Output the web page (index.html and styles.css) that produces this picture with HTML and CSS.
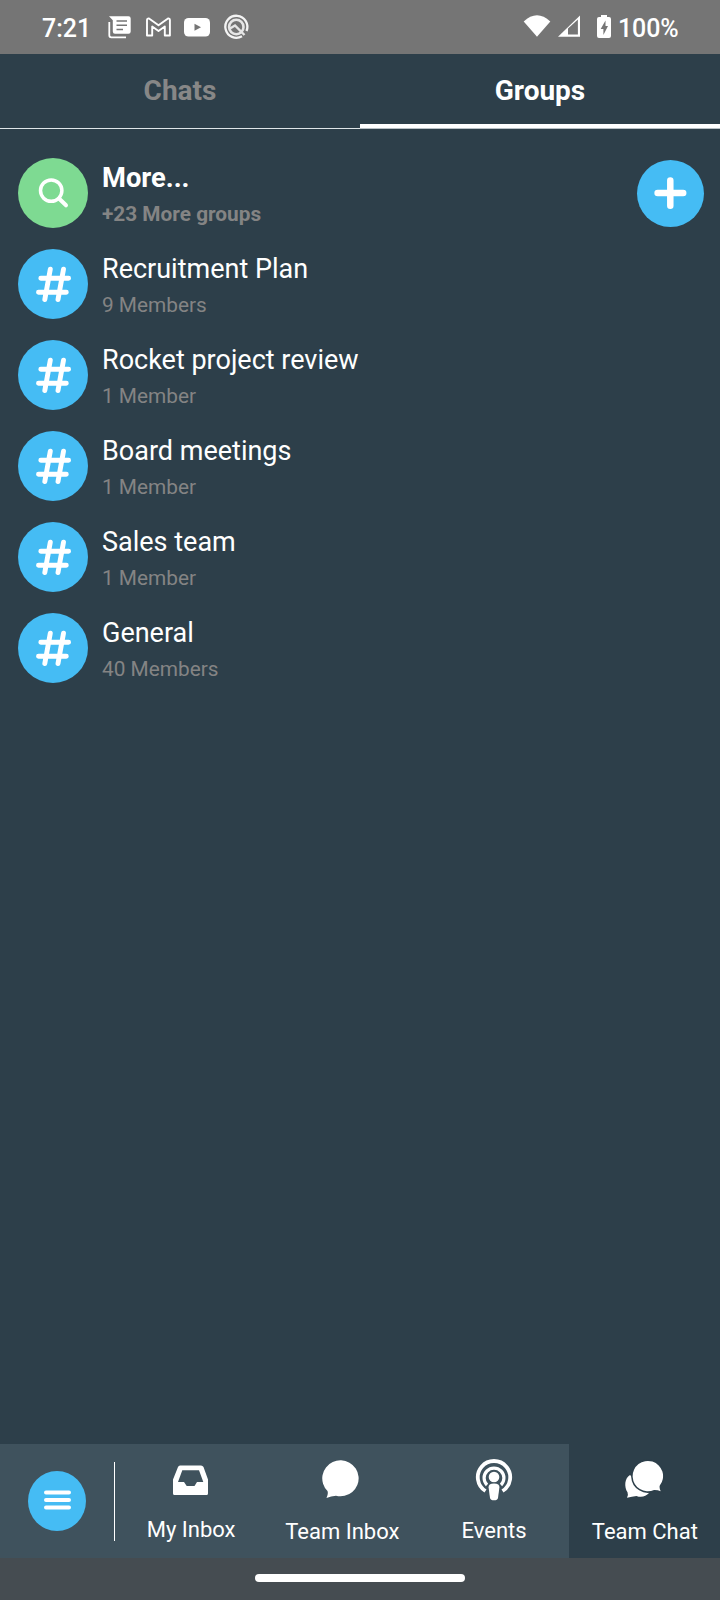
FILE: index.html
```html
<!DOCTYPE html>
<html lang="en">
<head>
<meta charset="utf-8">
<title>Groups</title>
<link rel="stylesheet" href="styles.css">
</head>
<body>
<svg class="defs" width="0" height="0">
  <symbol id="hash" viewBox="0 0 70 70">
    <path d="M32.300 20.200 26.800 50.500M45.500 20.200 40 50.500M22.800 29.300H50.600M20.500 43.300H48.300" fill="none" stroke="#fff" stroke-width="4.900" stroke-linecap="round"/>
  </symbol>
</svg>
<div class="screen">
  <header class="status">
    <span class="time">7:21</span>
    <svg class="notes" width="146" height="30" viewBox="105 12 146 30">
      <path d="M109 16.300H128.500Q130.700 16.300 130.700 18.500V31.600Q130.700 33.800 128.500 33.800H115Q112.800 33.800 112.800 31.600V20.300Z" fill="#fff"/>
      <path d="M116.500 21H127M116.500 25.200H127M116.500 29.500H123" stroke="#757575" stroke-width="1.500"/>
      <path d="M109.300 22V35.300Q109.300 37.300 111.300 37.300H126" fill="none" stroke="#fff" stroke-width="1.800"/>
      <path d="M147 35.500V20Q147.200 18.200 149 18.500L158.500 25.300 168 18.500Q169.800 18.200 169.900 20V35.500H164.800V26.500L158.500 31 152.200 26.500V35.500Z" fill="none" stroke="#fff" stroke-width="1.900" stroke-linejoin="round"/>
      <rect x="184" y="18" width="26" height="18.500" rx="4.500" fill="#fff"/>
      <path d="M194.500 23.800V30.800L201 27.300Z" fill="#757575"/>
      <path d="M242 36.200A11 11 0 1 1 246.500 31" fill="none" stroke="#f4f4f4" stroke-width="2.300"/>
      <circle cx="236.300" cy="27" r="7.200" fill="none" stroke="#e6e6e6" stroke-width="2.600"/>
      <path d="M230 28.500 235 25.500 244.500 35" fill="none" stroke="#e6e6e6" stroke-width="2.400"/>
    </svg>
    <svg class="signals" width="92" height="30" viewBox="522 12 92 30">
      <path d="M523.700 21.500Q537 9 550.300 21.500L537 36.700Z" fill="#fff"/>
      <path d="M558 36.800 580 15.500V36.800Z" fill="#fff"/>
      <path d="M568 28.500 577.900 19.500V34.600H568Z" fill="#757575"/>
      <path d="M601 15H607V17H609Q611 17 611 19V36Q611 38 609 38H599Q597 38 597 36V19Q597 17 599 17H601Z" fill="#fff"/>
      <path d="M605.500 20.500 600.700 29H603.400V35L608 26H605.500Z" fill="#757575"/>
    </svg>
    <span class="percent">100%</span>
  </header>
  <nav class="tabs">
    <div class="tab">Chats</div>
    <div class="tab tab-active">Groups</div>
  </nav>
  <main class="list">
    <div class="row row-more">
      <svg class="avatar search" viewBox="0 0 70 70"><circle cx="33.200" cy="32.600" r="10.700" fill="none" stroke="#fff" stroke-width="3.500"/><path d="M41 40.500 48 47.300" stroke="#fff" stroke-width="4" stroke-linecap="round"/></svg>
      <div class="text"><div class="title">More...</div><div class="sub">+23 More groups</div></div>
      <svg class="add" viewBox="0 0 67 67"><path d="M33.300 20.500V45.700M20.600 33.100H46.200" fill="none" stroke="#fff" stroke-width="6.500" stroke-linecap="round"/></svg>
    </div>
    <div class="row"><svg class="avatar"><use href="#hash"/></svg><div class="text"><div class="title">Recruitment Plan</div><div class="sub">9 Members</div></div></div>
    <div class="row"><svg class="avatar"><use href="#hash"/></svg><div class="text"><div class="title">Rocket project review</div><div class="sub">1 Member</div></div></div>
    <div class="row"><svg class="avatar"><use href="#hash"/></svg><div class="text"><div class="title">Board meetings</div><div class="sub">1 Member</div></div></div>
    <div class="row"><svg class="avatar"><use href="#hash"/></svg><div class="text"><div class="title">Sales team</div><div class="sub">1 Member</div></div></div>
    <div class="row"><svg class="avatar"><use href="#hash"/></svg><div class="text"><div class="title">General</div><div class="sub">40 Members</div></div></div>
  </main>
  <nav class="bottom">
    <div class="menu"><svg class="burger" viewBox="0 0 58 60"><path d="M18 21.500H41M18 29H41M18 36.500H41" stroke="#fff" stroke-width="4" stroke-linecap="round"/></svg></div>
    <div class="item inbox">
      <svg class="icon" viewBox="0 0 44 44"><path fill-rule="evenodd" d="M11 7.500H32Q33.700 7.500 34.500 9L39 21.500V35.500Q39 37 37.500 37H5.500Q4 37 4 35.500V21.500L9 9Q9.600 7.500 11 7.500ZM13.300 12.300 9 24H15L17.700 28H25.500L28 24H34.300L30 12.300Z" fill="#fff"/></svg>
      <span class="label">My Inbox</span>
    </div>
    <div class="item">
      <svg class="icon" viewBox="-1 0 44 44"><path d="M5.500 39.900Q7.500 35.500 6.500 33A18.200 18 0 1 1 15 37.800Q10 38.200 5.500 39.900Z" fill="#fff"/></svg>
      <span class="label">Team Inbox</span>
    </div>
    <div class="item events">
      <svg class="icon" viewBox="-1 0 44 44"><g fill="none" stroke="#fff"><path d="M13.500 33A16.200 16.200 0 1 1 30.500 33" stroke-width="3.800"/><path d="M15 27A9.900 9.900 0 1 1 29 27" stroke-width="3.200"/></g><circle cx="22" cy="19" r="5.300" fill="#fff"/><path d="M22 25.500Q27.800 25.500 27.400 29.500L26 40Q25.500 42.300 22 42.300T18 40L16.600 29.500Q16.200 25.500 22 25.500Z" fill="#fff" stroke="#3f525d" stroke-width="1.600" paint-order="stroke"/></svg>
      <span class="label">Events</span>
    </div>
    <div class="item item-active">
      <svg class="icon" viewBox="0 0 44 44"><path d="M5 39.800Q6.500 36.500 5.500 34.300C2 29 2.500 20 8 17L27 35C24 38.500 19 39.800 14.500 37.900Q10 38.500 5 39.800Z" fill="#fff"/><path d="M38.700 33.300Q37 29.500 37.800 27.500A15.200 15.200 0 1 0 32 32Q35.500 31.800 38.700 33.300Z" fill="#fff" stroke="#2d3f4a" stroke-width="3" paint-order="stroke"/></svg>
      <span class="label">Team Chat</span>
    </div>
  </nav>
  <footer class="gesture"><div class="pill"></div></footer>
</div>
</body>
</html>
```

FILE: styles.css
```css
* { box-sizing: border-box; }
body { margin: 0; font-family: Roboto, "Liberation Sans", sans-serif; color: #fff; }
.defs { display: none; }
.screen { width: 720px; height: 1600px; background: #2d3f4a; display: flex; flex-direction: column; }
.status { height: 54px; background: #757575; display: flex; align-items: center; padding: 0 0 0 42px; }
.time, .percent { font-size: 25px; font-weight: 500; line-height: 54px; padding-top: 3px; }
.time { width: 63px; }
.signals { margin-left: 271px; }
.percent { margin-left: 4px; letter-spacing: -0.1px; }
.tabs { height: 75px; display: flex; }
.tab { flex: 1; display: flex; justify-content: center; font-size: 28px; font-weight: 700; line-height: 74px; color: #878787; border-bottom: 1px solid #dfe5e8; }
.tab-active { color: #fff; border-bottom-color: #b8c0c5; box-shadow: inset 0 -4px 0 #fff; }
.list { flex: 1; padding-top: 29px; display: flex; flex-direction: column; gap: 21px; }
.row { height: 70px; display: flex; padding: 0 16px 0 18px; }
.avatar { width: 70px; height: 70px; border-radius: 50%; background: #45bcf4; flex: none; }
.search { background: #7eda92; }
.text { flex: 1; padding-left: 14px; }
.title { font-size: 27px; line-height: 32px; padding-top: 4px; }
.sub { font-size: 20.8px; line-height: 26px; padding-top: 7px; color: #848484; }
.row-more .text { font-weight: 700; }
.row-more .title { font-size: 27.3px; }
.add { width: 67px; height: 67px; margin-top: 2px; border-radius: 50%; background: #45bcf4; }
.bottom { height: 114px; display: flex; background: #3f525d; }
.menu { width: 115px; display: flex; align-items: center; padding-left: 28px; background: linear-gradient(#fff, #fff) right 18px / 1px 79px no-repeat; }
.burger { width: 58px; height: 60px; border-radius: 50%; background: #45bcf4; }
.item { flex: 1; display: flex; flex-direction: column; align-items: center; padding-top: 14px; }
.item-active { background: #2d3f4a; }
.icon { width: 44px; height: 44px; }
.label { font-size: 22px; line-height: 26px; padding: 17px 0 0 1px; }
.inbox .label { padding-top: 15px; }
.events .label { padding: 16px 0 0 2px; }
.gesture { height: 42px; background: #454c51; display: flex; justify-content: center; padding-top: 16px; }
.pill { width: 210px; height: 8px; border-radius: 4px; background: #fff; }
```
